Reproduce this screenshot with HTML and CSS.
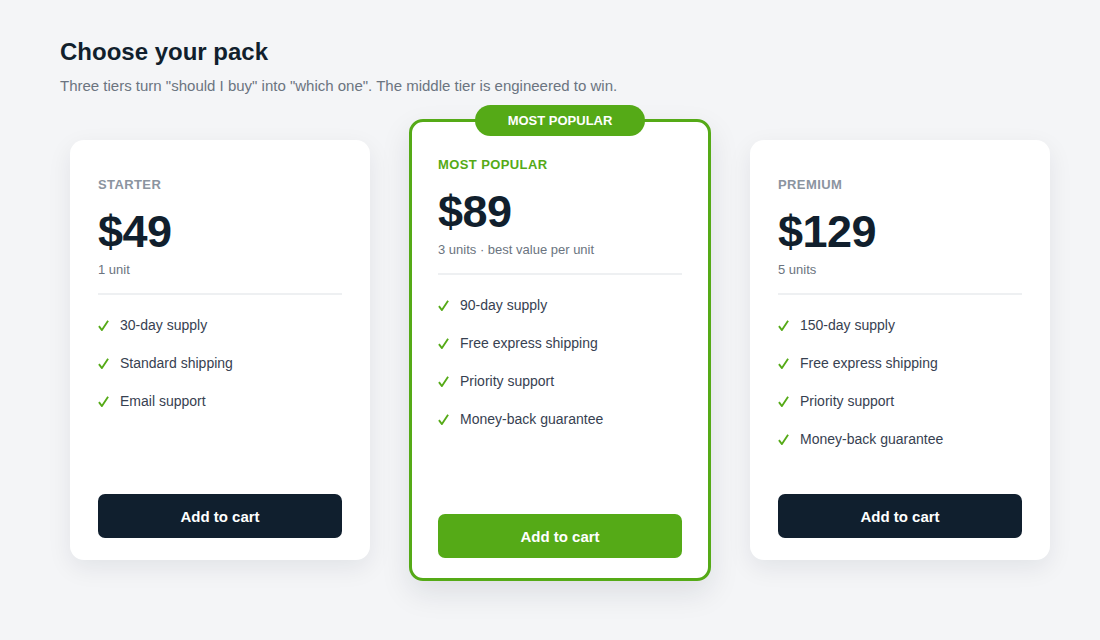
FILE: index.html
```html
<!DOCTYPE html>
<html lang="en">
<head>
    <meta charset="UTF-8">
    <title>Choose your pack</title>
    <link rel="stylesheet" href="styles.css">
</head>
<body>
    <h1>Choose your pack</h1>
    <p class="lead">Three tiers turn "should I buy" into "which one". The middle tier is engineered to win.</p>

    <div class="tiers">
        <div class="card">
            <div class="tier-name">Starter</div>
            <div class="price">$49</div>
            <div class="units">1 unit</div>
            <hr>
            <ul>
                <li><svg class="tick" viewBox="0 0 12 13"><path d="M1 7.2 L4.3 11.5 L11 1.2"/></svg>30-day supply</li>
                <li><svg class="tick" viewBox="0 0 12 13"><path d="M1 7.2 L4.3 11.5 L11 1.2"/></svg>Standard shipping</li>
                <li><svg class="tick" viewBox="0 0 12 13"><path d="M1 7.2 L4.3 11.5 L11 1.2"/></svg>Email support</li>
            </ul>
            <button>Add to cart</button>
        </div>

        <div class="card featured">
            <div class="badge">Most popular</div>
            <div class="tier-name">Most popular</div>
            <div class="price">$89</div>
            <div class="units">3 units · best value per unit</div>
            <hr>
            <ul>
                <li><svg class="tick" viewBox="0 0 12 13"><path d="M1 7.2 L4.3 11.5 L11 1.2"/></svg>90-day supply</li>
                <li><svg class="tick" viewBox="0 0 12 13"><path d="M1 7.2 L4.3 11.5 L11 1.2"/></svg>Free express shipping</li>
                <li><svg class="tick" viewBox="0 0 12 13"><path d="M1 7.2 L4.3 11.5 L11 1.2"/></svg>Priority support</li>
                <li><svg class="tick" viewBox="0 0 12 13"><path d="M1 7.2 L4.3 11.5 L11 1.2"/></svg>Money-back guarantee</li>
            </ul>
            <button>Add to cart</button>
        </div>

        <div class="card">
            <div class="tier-name">Premium</div>
            <div class="price">$129</div>
            <div class="units">5 units</div>
            <hr>
            <ul>
                <li><svg class="tick" viewBox="0 0 12 13"><path d="M1 7.2 L4.3 11.5 L11 1.2"/></svg>150-day supply</li>
                <li><svg class="tick" viewBox="0 0 12 13"><path d="M1 7.2 L4.3 11.5 L11 1.2"/></svg>Free express shipping</li>
                <li><svg class="tick" viewBox="0 0 12 13"><path d="M1 7.2 L4.3 11.5 L11 1.2"/></svg>Priority support</li>
                <li><svg class="tick" viewBox="0 0 12 13"><path d="M1 7.2 L4.3 11.5 L11 1.2"/></svg>Money-back guarantee</li>
            </ul>
            <button>Add to cart</button>
        </div>
    </div>
</body>
</html>
```

FILE: styles.css
```css
body {
    background-color: #f4f5f7;
    color: #111f2d;
    font-family: 'Liberation Sans', Arial, sans-serif;
    margin: 0;
    padding: 38px 60px 40px;
}

h1 {
    font-size: 24px;
    font-weight: bold;
    margin: 0;
    line-height: 28px;
    color: #111f2d;
}

.lead {
    font-size: 15px;
    color: #6b7480;
    margin: 11px 0 0;
    line-height: 18px;
}

.tiers {
    display: flex;
    align-items: center;
    gap: 39px;
    margin: 24px 0 0 10px;
}

.card {
    position: relative;
    flex-shrink: 0;
    box-sizing: border-box;
    width: 300px;
    height: 420px;
    background: #fff;
    border-radius: 14px;
    padding: 36px 28px 22px;
    display: flex;
    flex-direction: column;
    box-shadow: 0 8px 24px rgba(17, 31, 45, 0.08);
}

.card.featured {
    width: 302px;
    height: 462px;
    border: 3px solid #55aa17;
    padding: 34px 26px 20px;
    box-shadow: 0 12px 30px rgba(17, 31, 45, 0.1);
}

.badge {
    position: absolute;
    top: -17px;
    left: 50%;
    transform: translateX(-50%);
    width: 170px;
    height: 31px;
    line-height: 31px;
    text-align: center;
    background: #55aa17;
    color: #fff;
    border-radius: 16px;
    font-size: 13px;
    font-weight: bold;
    text-transform: uppercase;
}

.tier-name {
    font-size: 13px;
    font-weight: bold;
    text-transform: uppercase;
    letter-spacing: 0.4px;
    color: #8b949f;
    line-height: 18px;
}

.featured .tier-name {
    color: #55aa17;
}

.price {
    font-size: 45px;
    font-weight: bold;
    letter-spacing: -0.5px;
    line-height: 44px;
    margin-top: 16px;
}

.units {
    font-size: 13px;
    color: #6b7480;
    line-height: 16px;
    margin-top: 8px;
}

hr {
    border: none;
    height: 2px;
    background: #eef0f2;
    margin: 15px 0 0;
}

ul {
    list-style: none;
    padding: 0;
    margin: 20px 0 0;
}

li {
    font-size: 14px;
    color: #374151;
    line-height: 20px;
    margin-bottom: 18px;
    display: flex;
    align-items: center;
}

.tick {
    width: 11px;
    height: 13px;
    margin: 0 11px 0 0;
    fill: none;
    stroke: #55aa17;
    stroke-width: 2;
    stroke-linejoin: round;
}

button {
    margin-top: auto;
    height: 44px;
    border: none;
    border-radius: 7px;
    background: #101f2e;
    color: #fff;
    font-family: 'Liberation Sans', Arial, sans-serif;
    font-size: 15px;
    font-weight: bold;
    cursor: pointer;
}

.featured button {
    background: #55aa17;
}
```
